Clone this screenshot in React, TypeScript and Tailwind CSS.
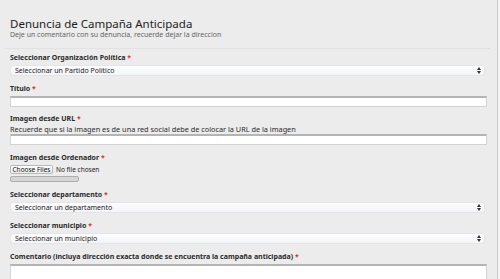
import React from 'react'

const font = { fontFamily: '"Noto Sans", "DejaVu Sans", sans-serif' }

function Label({ text, className = '' }: { text: string; className?: string }) {
  return (
    <div className={`h-[10px] text-[7px] leading-[10px] font-bold text-[#2b2b2b] ${className}`}>
      {text} <span className="text-[#d9342b]">*</span>
    </div>
  )
}

function FakeSelect({ placeholder }: { placeholder: string }) {
  return (
    <div className="mt-[2px] mr-[12px] flex h-[11px] items-center justify-between rounded-[3px] border border-[#e3e5e8] bg-gradient-to-b from-[#fdfdfe] to-[#f3f4f6] pl-[4px] pr-[3px]">
      <span className="text-[7px] leading-[9px] text-[#222]">{placeholder}</span>
      <svg width="4" height="7" viewBox="0 0 4 7">
        <path d="M0 3 L2 0 L4 3 Z" fill="#333" />
        <path d="M0 4 L2 7 L4 4 Z" fill="#333" />
      </svg>
    </div>
  )
}

function TextInput({ className = '' }: { className?: string }) {
  return (
    <div
      className={`mr-[10px] h-[11px] border border-[#d2d2d2] border-t-[2px] border-t-[#b4b4b4] bg-white ${className}`}
    />
  )
}

export default function App() {
  return (
    <div className="flex h-[279px] w-[500px] overflow-hidden bg-[#ececec]" style={font}>
      <div className="flex-1">
        <div className="pl-[10px] pt-[17px]">
          <h1 className="h-[14px] text-[11.5px] leading-[14px] text-[#1e1e1e]">Denuncia de Campaña Anticipada</h1>
          <p className="h-[8px] text-[7px] leading-[8px] text-[#666]">
            Deje un comentario con su denuncia, recuerde dejar la direccion
          </p>
        </div>
        <div className="ml-[4px] mr-[7px] mt-[9px] h-px bg-[#e2e2e2]" />

        <div className="pl-[10px]">
          <Label text="Seleccionar Organización Política" className="mt-[4px]" />
          <FakeSelect placeholder="Seleccionar un Partido Político" />

          <Label text="Título" className="mt-[8px]" />
          <TextInput className="mt-[2px]" />

          <Label text="Imagen desde URL" className="mt-[7px]" />
          <div className="h-[10px] text-[7.3px] leading-[10px] text-[#2b2b2b]">
            Recuerde que si la imagen es de una red social debe de colocar la URL de la imagen
          </div>
          <TextInput />

          <Label text="Imagen desde Ordenador" className="mt-[8px]" />
          <div className="mt-[2px] flex h-[9px] items-center gap-[3px]">
            <div className="flex h-[9px] w-[43px] items-center justify-center rounded-[2px] border border-[#b8b8b8] bg-gradient-to-b from-white to-[#ececec] text-[6.5px] leading-[9px] text-[#111]">
              Choose Files
            </div>
            <span className="text-[6.5px] leading-[9px] text-[#222]">No file chosen</span>
          </div>
          <div className="mt-[2px] h-[6px] w-[69px] rounded-[2px] border border-[#adadad] bg-[#d6d6d6]" />

          <Label text="Seleccionar departamento" className="mt-[8px]" />
          <FakeSelect placeholder="Seleccionar un departamento" />

          <Label text="Seleccionar municipio" className="mt-[8px]" />
          <FakeSelect placeholder="Seleccionar un municipio" />

          <Label text="Comentario (incluya dirección exacta donde se encuentra la campaña anticipada)" className="mt-[8px]" />
          <div className="mr-[10px] mt-[2px] h-[40px] border border-[#d2d2d2] border-t-[2px] border-t-[#b4b4b4] bg-white" />
        </div>
      </div>
      <div className="w-px bg-[#c9c9c9]" />
      <div className="w-[2px] bg-[#f4f4f4]" />
    </div>
  )
}
